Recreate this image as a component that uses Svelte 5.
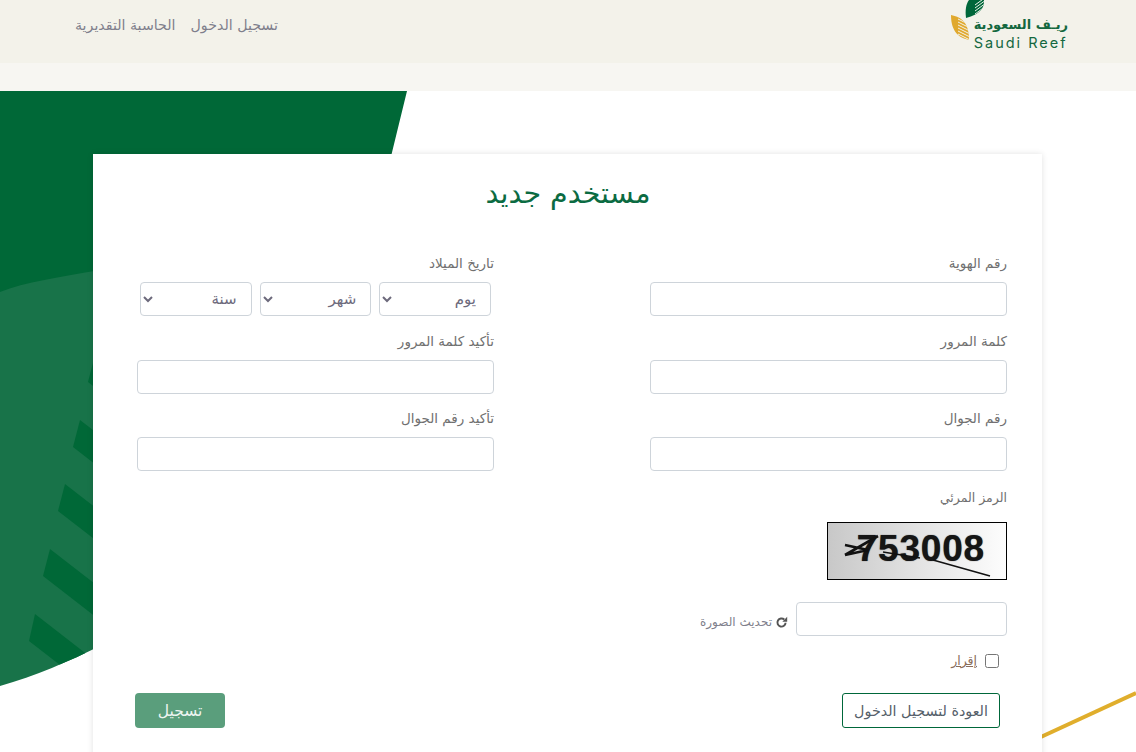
<script lang="ts">
  // stripe tops and bottoms, relative to the backdrop svg
  const stripes = [
    [95, 264, 88, 291],
    [80, 329, 73, 356],
    [65, 393, 58, 420],
    [50, 458, 43, 485],
    [35, 523, 29, 550],
  ]
  const topLeafLines = [2, 5, 8, 11, 14, 17]
  const yellowLeafLines = [20, 23, 26, 29, 32, 35, 38]
</script>

<div class="page">
  <header class="topbar">
    <div class="brand">
      <div class="brand-text">
        <span class="brand-ar">ريـف السعودية</span>
        <span class="brand-en">Saudi Reef</span>
      </div>
      <svg class="leaves" viewBox="0 0 36 44" width="36" height="44">
        <defs>
          <clipPath id="leaf-top"><path d="M16 18C15 10 16 4 19 0H34C34.5 8 30 14 16 18Z" /></clipPath>
          <clipPath id="leaf-yellow"><path d="M1 15C11 17 19 22 19 40C10 38 1 33 1 15Z" /></clipPath>
        </defs>
        <path d="M16 18C15 10 16 4 19 0H34C34.5 8 30 14 16 18Z" fill="#00673a" />
        <g clip-path="url(#leaf-top)" stroke="#e8efe6" stroke-width="1">
          {#each topLeafLines as y}
            <line x1="25" y1={y + 3} x2="36" y2={y - 5} />
          {/each}
        </g>
        <path d="M1 15C11 17 19 22 19 40C10 38 1 33 1 15Z" fill="#e0a92e" />
        <g clip-path="url(#leaf-yellow)" stroke="#f3f2ea" stroke-width="1">
          {#each yellowLeafLines as y}
            <line x1="8" y1={y - 4} x2="20" y2={y + 2} />
          {/each}
        </g>
      </svg>
    </div>
    <nav class="nav">
      <a href="#login">تسجيل الدخول</a>
      <a href="#calc">الحاسبة التقديرية</a>
    </nav>
  </header>
  <div class="strip"></div>

  <main class="main">
    <svg class="backdrop" viewBox="0 0 1136 661" width="1136" height="661">
      <defs>
        <clipPath id="light"><path d="M0 201C25 191 60 186 100 179V555C70 570 35 585 0 595Z" /></clipPath>
      </defs>
      <path d="M0 0H407L385 90H100V400H0Z" fill="#006837" />
      <path d="M0 201C25 191 60 186 100 179V555C70 570 35 585 0 595Z" fill="#187349" />
      <g clip-path="url(#light)" fill="#006837">
        {#each stripes as [tx, ty, bx, by]}
          <path d="M{tx} {ty}L{tx + 80} {ty + 62}L{bx + 80} {by + 62}L{bx} {by}Z" />
        {/each}
      </g>
      <path d="M1030 651L1136 602" stroke="#e0ae2c" stroke-width="4" fill="none" />
    </svg>

    <section class="card">
      <h1>مستخدم جديد</h1>
      <form class="form">
        <div class="field">
          <label for="idn">رقم الهوية</label>
          <input id="idn" type="text" />
        </div>
        <div class="field">
          <span class="label">تاريخ الميلاد</span>
          <div class="dates">
            <select><option>يوم</option></select>
            <select><option>شهر</option></select>
            <select><option>سنة</option></select>
          </div>
        </div>
        <div class="field">
          <label for="pw">كلمة المرور</label>
          <input id="pw" type="password" />
        </div>
        <div class="field">
          <label for="pw2">تأكيد كلمة المرور</label>
          <input id="pw2" type="password" />
        </div>
        <div class="field">
          <label for="mob">رقم الجوال</label>
          <input id="mob" type="text" />
        </div>
        <div class="field">
          <label for="mob2">تأكيد رقم الجوال</label>
          <input id="mob2" type="text" />
        </div>

        <div class="captcha">
          <span class="label captcha-label">الرمز المرئي</span>
          <div class="captcha-img">
            <span>753008</span>
            <svg viewBox="0 0 178 56" width="178" height="56">
              <path d="M17 32L50 13M17 32L40 27L17 22" stroke="#111" stroke-width="2.6" fill="none" />
              <path d="M55 29L92 35" stroke="#111" stroke-width="1.6" fill="none" />
              <path d="M105 37L162 53" stroke="#111" stroke-width="1.6" fill="none" />
            </svg>
          </div>
          <div class="captcha-row">
            <input type="text" />
            <a class="refresh" href="#refresh">
              <svg viewBox="0 0 16 16" width="13" height="13">
                <path d="M13 8.2A5 5 0 1 1 11.4 4.4" stroke="#555" stroke-width="2.4" fill="none" />
                <path d="M15 1V7H9Z" fill="#555" />
              </svg>
              <span>تحديث الصورة</span>
            </a>
          </div>
          <label class="agree">
            <input type="checkbox" />
            <u>إقرار</u>
          </label>
        </div>

        <div class="actions">
          <a class="back" href="#login">العودة لتسجيل الدخول</a>
          <button class="submit" type="button">تسجيل</button>
        </div>
      </form>
    </section>
  </main>
</div>

<style>
  :global(body) {
    margin: 0;
    background: #fff;
    overflow: hidden;
  }
  .page {
    width: 1136px;
    height: 752px;
    overflow: hidden;
    font-family: "DejaVu Sans", sans-serif;
    font-size: 13px;
    color: #6f6f6f;
  }
  .topbar {
    height: 63px;
    box-sizing: border-box;
    background: #f3f2ea;
    direction: rtl;
    display: flex;
    justify-content: space-between;
    padding: 0 68px 0 75px;
  }
  .brand {
    display: flex;
    align-items: flex-start;
    gap: 0;
  }
  .leaves {
    display: block;
    margin-right: -12px;
    position: relative;
    flex: none;
  }
  .brand-text {
    display: flex;
    flex-direction: column;
    align-items: flex-end;
    color: #14683f;
    padding-top: 17px;
    line-height: 16px;
    position: relative;
    z-index: 1;
  }
  .brand-ar {
    font-size: 13px;
    font-weight: 700;
  }
  .brand-en {
    direction: ltr;
    font-family: "Inter", sans-serif;
    font-size: 14.5px;
    letter-spacing: 2px;
    margin-top: 2px;
  }
  .nav {
    display: flex;
    gap: 15px;
    padding-top: 15px;
  }
  .nav a {
    color: #7f7f8c;
    text-decoration: none;
    font-size: 14.2px;
    line-height: 20px;
  }
  .strip {
    height: 28px;
    background: #f7f6f2;
  }
  .main {
    position: relative;
    height: 661px;
    padding-top: 63px;
    box-sizing: border-box;
  }
  .backdrop {
    position: absolute;
    top: 0;
    left: 0;
  }
  .card {
    position: relative;
    width: 949px;
    height: 640px;
    margin-left: 93px;
    background: #fff;
    box-shadow: 0 0 6px rgba(0, 0, 0, 0.12);
    direction: rtl;
    box-sizing: border-box;
    padding: 22px 35px 0 44px;
  }
  h1 {
    margin: 0 0 42px;
    font-size: 28.5px;
    font-weight: 400;
    line-height: 36px;
    color: #0b6b42;
    text-align: center;
    padding-right: 8px;
  }
  .form {
    display: grid;
    grid-template-columns: 357px 357px;
    justify-content: space-between;
    row-gap: 15.5px;
  }
  .field {
    display: flex;
    flex-direction: column;
    gap: 10px;
  }
  label,
  .label {
    font-size: 13.5px;
    line-height: 18px;
    color: #707070;
    display: block;
  }
  .captcha-label {
    font-size: 12.5px;
    padding-top: 2px;
  }
  input[type="text"],
  input[type="password"] {
    height: 34px;
    box-sizing: border-box;
    border: 1px solid #ced4da;
    border-radius: 4px;
    background: #fff;
    width: 100%;
    display: block;
  }
  .dates {
    display: flex;
    gap: 8px;
    padding-right: 3px;
  }
  select {
    width: 111.67px;
    height: 34px;
    box-sizing: border-box;
    border: 1px solid #ced4da;
    border-radius: 4px;
    background: #fff;
    color: #6d6a7c;
    font-family: inherit;
    font-size: 15px;
    padding: 0 10px 0 12px;
  }
  .captcha {
    grid-column: 1;
    width: 357px;
  }
  .captcha-img {
    position: relative;
    width: 180px;
    height: 58px;
    margin-top: 15.5px;
    border: 1px solid #000;
    box-sizing: border-box;
    background: linear-gradient(90deg, #c8c8c8, #fdfdfd);
    direction: ltr;
    display: flex;
    align-items: center;
    justify-content: flex-end;
    padding-right: 21px;
    overflow: hidden;
  }
  .captcha-img span {
    font-family: "Liberation Sans", sans-serif;
    font-weight: 700;
    font-size: 37px;
    letter-spacing: 0.8px;
    color: #151515;
    margin-top: -4px;
    text-shadow: 0 0 1px #333;
  }
  .captcha-img svg {
    position: absolute;
    top: 0;
    left: 0;
  }
  .captcha-row {
    display: flex;
    align-items: center;
    gap: 8px;
    margin-top: 22px;
  }
  .captcha-row input[type="text"] {
    width: 211px;
  }
  .refresh {
    display: flex;
    align-items: center;
    gap: 3px;
    color: #7f7f8c;
    font-size: 12px;
    text-decoration: none;
    margin-top: 6px;
  }
  .agree {
    display: flex;
    align-items: center;
    gap: 8px;
    margin-top: 15px;
    padding-right: 8px;
    height: 20px;
    color: #8a6d5a;
    font-size: 12.5px;
  }
  .agree input {
    width: 14px;
    height: 14px;
    margin: 0;
  }
  .actions {
    grid-column: 1 / -1;
    display: flex;
    justify-content: space-between;
    padding: 0 7px 0 0;
    margin: 6.5px 0 0 -2px;
  }
  .back {
    width: 158px;
    height: 35px;
    box-sizing: border-box;
    border: 1px solid #00673a;
    border-radius: 3px;
    display: flex;
    align-items: center;
    justify-content: center;
    color: #55606a;
    font-size: 14.3px;
    text-decoration: none;
  }
  .submit {
    width: 90px;
    height: 35px;
    border: 0;
    border-radius: 4px;
    background: #5a9e7c;
    color: #eef5f1;
    font-family: inherit;
    font-size: 15.5px;
  }
</style>
